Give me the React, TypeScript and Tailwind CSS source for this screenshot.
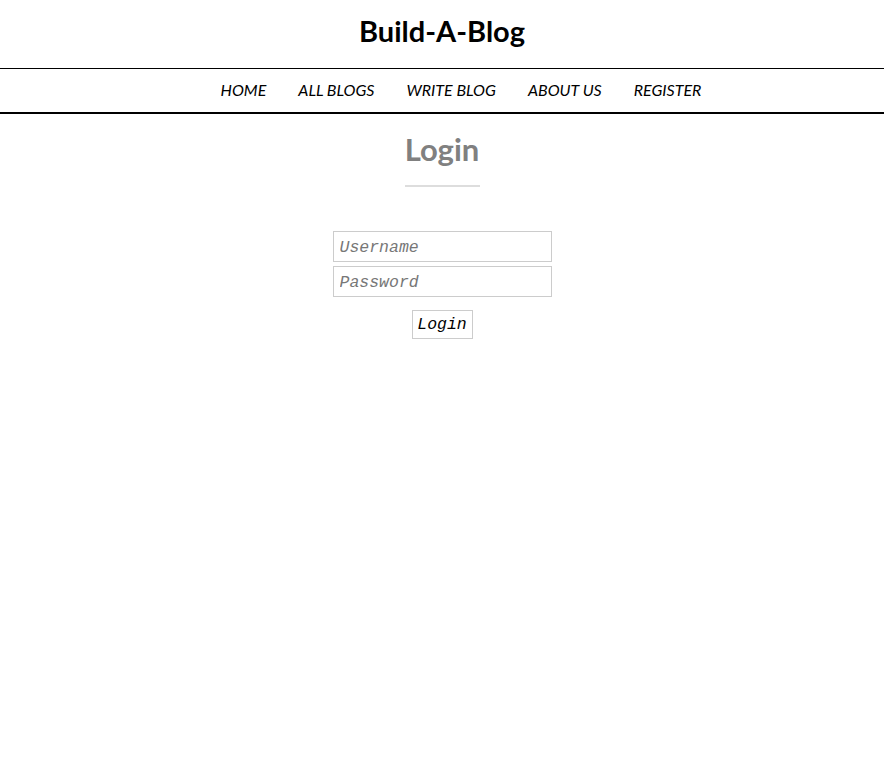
import React from 'react';

const links = ['HOME', 'ALL BLOGS', 'WRITE BLOG', 'ABOUT US', 'REGISTER'];

const App: React.FC = () => {
  return (
    <div className="min-h-screen bg-white font-['Lato',sans-serif] text-black">
      <header>
        <h1 className="h-[68px] pb-[6px] flex items-center justify-center text-[29px] font-bold">Build-A-Blog</h1>
        <nav className="border-t border-black border-b-2 h-[46px] pb-[2px] pl-[38px] flex items-center justify-center gap-8">
          {links.map((l) => (
            <a key={l} href="#" className="italic text-[16px]">
              {l}
            </a>
          ))}
        </nav>
      </header>
      <main className="flex flex-col items-center">
        <h2 className="mt-[15px] text-[31px] font-bold text-[#808080] leading-[40px]">Login</h2>
        <div className="mt-[16px] w-[75px] h-[2px] bg-[#dddddd]" />
        <form className="mt-[44px] flex flex-col items-center gap-[4px] font-['Liberation_Mono',monospace] italic">
          <input
            placeholder="Username"
            className="w-[219px] h-[31px] border border-[#cccccc] px-[6px] pt-[2px] text-[16.5px] placeholder:text-[#777777] outline-none"
          />
          <input
            type="password"
            placeholder="Password"
            className="w-[219px] h-[31px] border border-[#cccccc] px-[6px] pt-[2px] text-[16.5px] placeholder:text-[#777777] outline-none"
          />
          <button
            type="button"
            className="mt-[9px] w-[61px] h-[29px] pt-[2px] border border-[#cccccc] text-[16.5px] italic bg-white"
          >
            Login
          </button>
        </form>
      </main>
    </div>
  );
};

export default App;
